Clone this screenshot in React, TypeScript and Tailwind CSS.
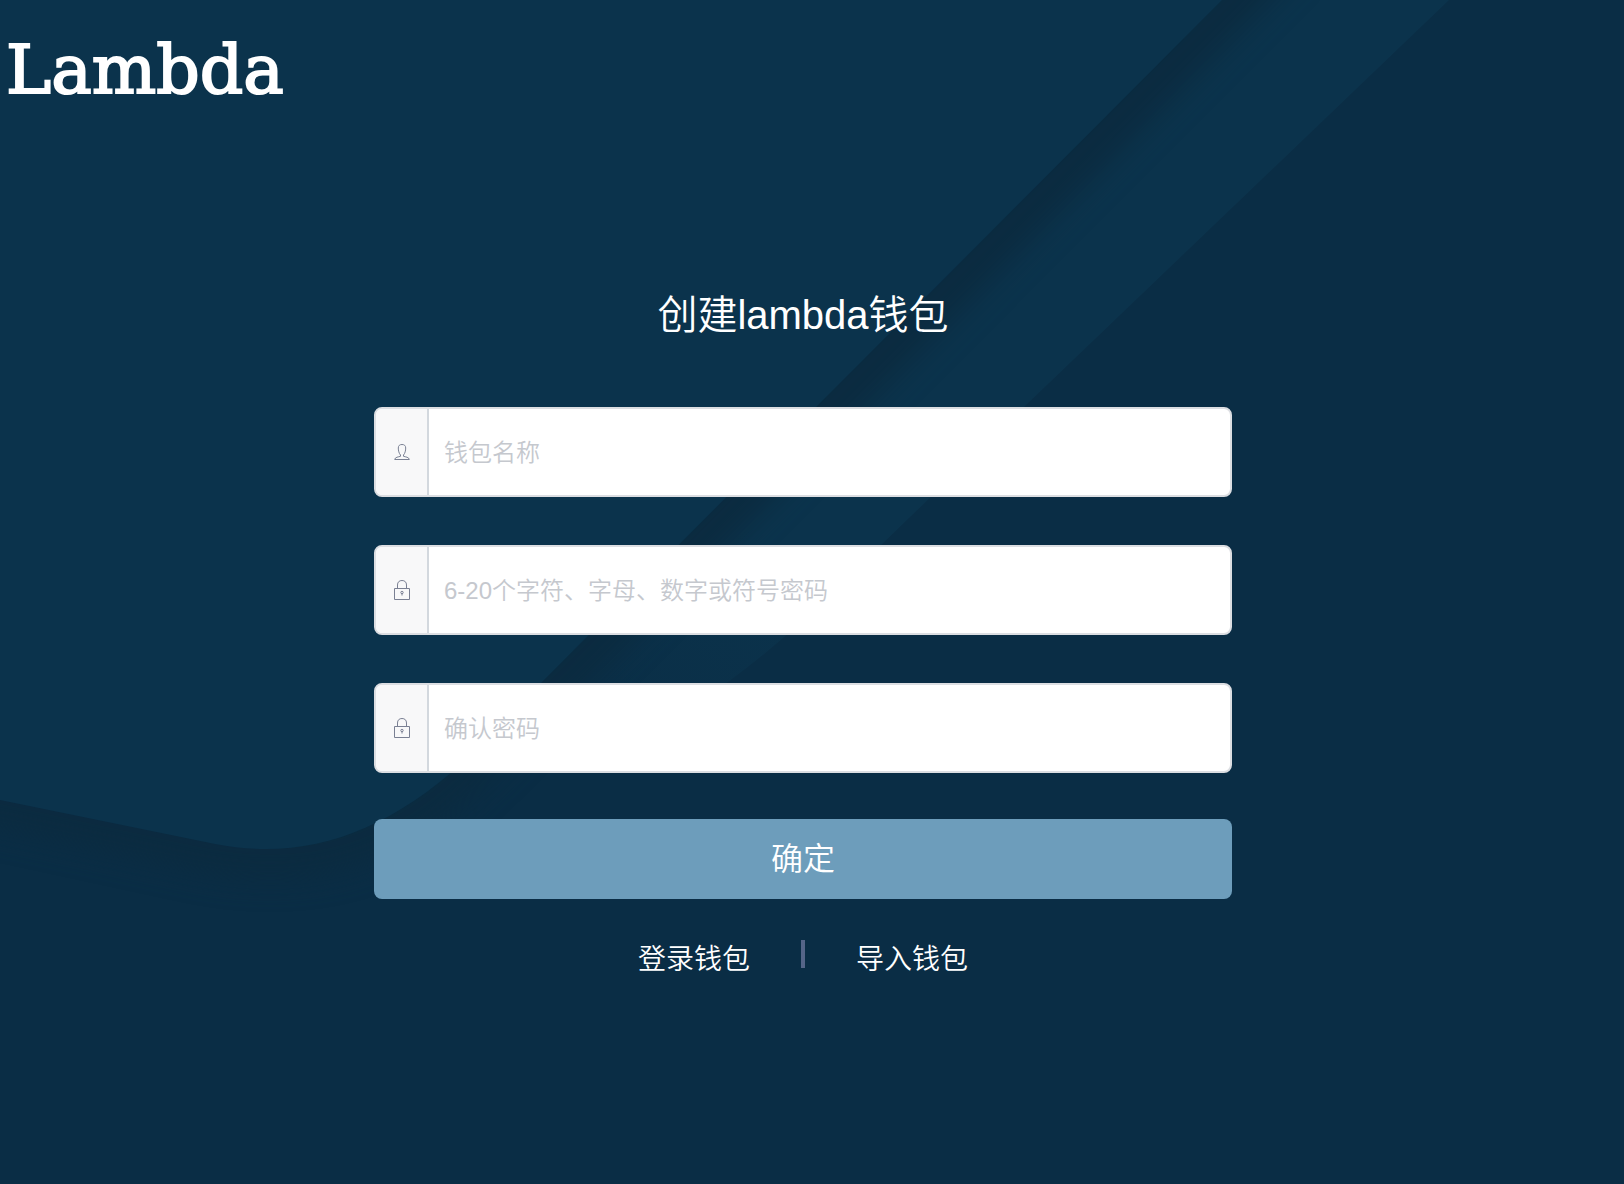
import React from "react";

const sans = "font-['Liberation_Sans','Noto_Sans_CJK_SC',sans-serif] font-[350]";

function Backdrop() {
  return (
    <svg
      className="absolute inset-0 h-full w-full"
      viewBox="0 0 1624 1184"
      preserveAspectRatio="xMinYMin slice"
      aria-hidden="true"
    >
      <defs>
        <linearGradient id="band" gradientUnits="userSpaceOnUse" x1="740" y1="520" x2="530" y2="750">
          <stop offset="0" stopColor="#0b334c" />
          <stop offset="1" stopColor="#0a2d45" />
        </linearGradient>
        <filter id="soft" x="-20%" y="-20%" width="140%" height="140%" colorInterpolationFilters="sRGB">
          <feGaussianBlur stdDeviation="14" />
        </filter>
      </defs>
      <rect width="1624" height="1184" fill="#0a2d45" />
      <path d="M1449 0L1025 406L880 546Q740 690 640 735Q520 790 380 860L1222 0Z" fill="url(#band)" />
      <path
        d="M-60 788L195 843C300 867 385 842 455 776L544 690L1282 -50"
        fill="none"
        stroke="#0b2b40"
        strokeWidth="54"
        filter="url(#soft)"
      />
      <path d="M0 0H1222L544 680L470 756C385 835 305 861 215 844L0 800Z" fill="#0b334c" />
    </svg>
  );
}

function UserIcon() {
  return (
    <svg width="18" height="18" viewBox="0 0 18 18" fill="none" stroke="#7a8093" strokeWidth="1" aria-hidden="true">
      <path d="M7.500 12C6 10.500 5.300 7.500 5.300 5C5.300 2.600 6.700 1.500 9 1.500S12.700 2.600 12.700 5C12.700 7.500 12 10.500 10.500 12V13.300C12.500 14 16 14 16.300 16.500H1.700C2 14 5.500 14 7.500 13.300Z" />
    </svg>
  );
}

function LockIcon() {
  return (
    <svg width="18" height="22" viewBox="0 0 18 22" fill="none" stroke="#7a8093" strokeWidth="1" aria-hidden="true">
      <path d="M1.500 9.500H16.500V20.500H1.500Z" />
      <path d="M4.500 9.500V6C4.500 3 6.300 1.500 9 1.500S13.500 3 13.500 6V9.500" />
      <circle cx="9" cy="13.500" r="1.200" />
      <path d="M9 14V16.500" />
    </svg>
  );
}

type FieldProps = { id: string; type: string; placeholder: string; icon: React.ReactNode };

function Field({ id, type, placeholder, icon }: FieldProps) {
  return (
    <div className="flex h-[90px] overflow-hidden rounded-lg border-2 border-[#dcdee2] bg-white">
      <label
        htmlFor={id}
        aria-label={placeholder}
        className="flex w-[53px] shrink-0 items-center justify-center border-r-2 border-[#d3d8de] bg-[#f8f8f9]"
      >
        {icon}
      </label>
      <input
        id={id}
        type={type}
        placeholder={placeholder}
        className="min-w-0 flex-1 bg-transparent px-[15px] pt-0.5 text-2xl text-[#515a6e] outline-none placeholder:text-[#c5c8ce]"
      />
    </div>
  );
}

export default function App() {
  return (
    <div className={`relative min-h-screen overflow-hidden bg-[#0a2d45] text-white ${sans}`}>
      <Backdrop />
      <div className="relative">
        <header className="flex h-32 items-center px-1.5 pt-3">
          <span className="font-['DejaVu_Serif',serif] text-[68px] leading-none font-normal [-webkit-text-stroke:2px_white]">
            Lambda
          </span>
        </header>
        <main className="pt-[157px] pr-[18px]">
          <form className="mx-auto w-full max-w-[858px]">
            <h1 className="text-center text-[40px] leading-[60px] font-[350]">创建lambda钱包</h1>
            <div className="mt-[62px] flex flex-col gap-12">
              <Field id="name" type="text" placeholder="钱包名称" icon={<UserIcon />} />
              <Field id="password" type="password" placeholder="6-20个字符、字母、数字或符号密码" icon={<LockIcon />} />
              <Field id="confirm" type="password" placeholder="确认密码" icon={<LockIcon />} />
            </div>
            <button type="button" className="mt-[46px] h-20 w-full rounded-lg bg-[#6d9dbb] text-[32px]">
              确定
            </button>
            <nav className="mt-[41px] flex justify-center text-[28px] leading-10">
              <a href="#login">登录钱包</a>
              <span className="mx-[51px] h-7 w-1 bg-[#556588]" />
              <a href="#import">导入钱包</a>
            </nav>
          </form>
        </main>
      </div>
    </div>
  );
}
